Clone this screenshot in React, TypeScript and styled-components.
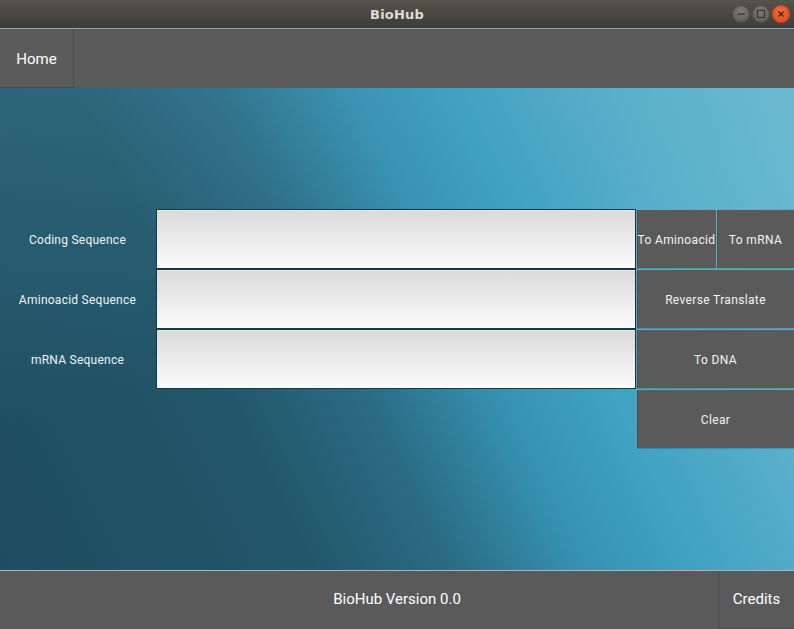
import React from "react";
import styled, { createGlobalStyle } from "styled-components";

const Global = createGlobalStyle`
  html, body { margin: 0; padding: 0; background: #3c3b37; }
  * { box-sizing: border-box; }
`;

const Window = styled.div`
  width: 794px;
  height: 629px;
  display: flex;
  flex-direction: column;
  overflow: hidden;
  font-family: Roboto, "Liberation Sans", sans-serif;
`;

const TitleBar = styled.div`
  height: 29px;
  flex: none;
  position: relative;
  display: flex;
  align-items: center;
  justify-content: center;
  background: linear-gradient(#56534c, #3e3c38);
  border-bottom: 1px solid #8fa4ad;
`;

const Title = styled.span`
  font-family: "DejaVu Sans", sans-serif;
  font-weight: bold;
  font-size: 13px;
  color: #dfdbd2;
  letter-spacing: 0.2px;
`;

const Controls = styled.div`
  position: absolute;
  right: 4px;
  top: 5px;
  display: flex;
  gap: 2px;
`;

const Dot = styled.div<{ $close?: boolean }>`
  width: 18px;
  height: 18px;
  border-radius: 50%;
  display: flex;
  align-items: center;
  justify-content: center;
  background: ${(p) =>
    p.$close
      ? "radial-gradient(circle at 50% 35%, #f26a3c, #d9461a)"
      : "radial-gradient(circle at 50% 35%, #7c7a74, #5a5853)"};
  box-shadow: inset 0 0 0 1px ${(p) => (p.$close ? "#b8421c" : "#4a4843")};
`;

const Header = styled.div`
  height: 59px;
  flex: none;
  display: flex;
  background: #5a5a5a;
`;

const HomeButton = styled.div`
  width: 74px;
  display: flex;
  align-items: center;
  justify-content: center;
  padding-top: 1px;
  color: #ffffff;
  font-size: 15px;
  background: #5b5b5b;
  border-right: 1px solid #4b4b4b;
  border-bottom: 1px solid #4a4a4a;
`;

const Main = styled.div`
  flex: 1;
  background:
    linear-gradient(160deg, rgba(90, 160, 185, 0.22) 0%, rgba(90, 160, 185, 0) 45%),
    linear-gradient(
      64deg,
      #1e4d5f 0%,
      #22566a 30%,
      #2a6c84 44%,
      #3792b2 57%,
      #40a1c1 67%,
      #5ab1cb 83%,
      #6cbad1 100%
    );
  padding-top: 121px;
`;

const Form = styled.div`
  display: grid;
  grid-template-columns: 155px 480px 157px;
  grid-template-rows: 60px 60px 60px 60px;
  column-gap: 1px;
`;

const Label = styled.div<{ $row: number }>`
  grid-column: 1;
  grid-row: ${(p) => p.$row};
  display: flex;
  align-items: center;
  justify-content: center;
  padding-top: 2px;
  color: #eef2f4;
  font-size: 12px;
  letter-spacing: 0.25px;
`;

const Field = styled.div<{ $row: number }>`
  grid-column: 2;
  grid-row: ${(p) => p.$row};
  border: 1px solid #173845;
  background: linear-gradient(#dadada, #f6f6f6 85%, #fbfbfb);
  box-shadow: inset 0 1px 0 #e8e8e8;
`;

const ButtonCell = styled.div<{ $row: number }>`
  grid-column: 3;
  grid-row: ${(p) => p.$row};
  display: flex;
  gap: 1px;
  padding-bottom: 1px;
`;

const Btn = styled.div<{ $w?: number }>`
  flex: ${(p) => (p.$w ? `0 0 ${p.$w}px` : "1")};
  display: flex;
  align-items: center;
  justify-content: center;
  padding-top: 2px;
  background: #5a5a5a;
  color: #f2f2f2;
  font-size: 12px;
  letter-spacing: 0.35px;
  white-space: nowrap;
  border-top: 1px solid #78a3b3;
  box-shadow: inset 1px 0 0 #505050, 0 1px 0 rgba(0,0,0,0.15);
`;

const Footer = styled.div`
  height: 59px;
  flex: none;
  display: grid;
  grid-template-columns: 76px 1fr 76px;
  background: #5a5a5a;
  border-top: 1px solid #a9b4b8;
`;

const FooterText = styled.div`
  grid-column: 2;
  display: flex;
  align-items: center;
  justify-content: center;
  padding-bottom: 2px;
  color: #ffffff;
  font-size: 15px;
`;

const Credits = styled.div`
  grid-column: 3;
  display: flex;
  align-items: center;
  justify-content: center;
  padding-bottom: 2px;
  color: #ffffff;
  font-size: 15px;
  border-left: 1px solid #4d4d4d;
  border-bottom: 1px solid #4a4a4a;
`;

export default function App() {
  return (
    <Window>
      <Global />
      <TitleBar>
        <Title>BioHub</Title>
        <Controls>
          <Dot>
            <svg width="10" height="10" viewBox="0 0 10 10">
              <line x1="1.5" y1="5" x2="8.5" y2="5" stroke="#3a3935" strokeWidth="1.4" />
            </svg>
          </Dot>
          <Dot>
            <svg width="10" height="10" viewBox="0 0 10 10">
              <rect x="1.5" y="1.5" width="7" height="7" fill="none" stroke="#3a3935" strokeWidth="1.3" />
            </svg>
          </Dot>
          <Dot $close>
            <svg width="10" height="10" viewBox="0 0 10 10">
              <path d="M2.5 2.5 L7.5 7.5 M7.5 2.5 L2.5 7.5" stroke="#3a2a22" strokeWidth="1.4" />
            </svg>
          </Dot>
        </Controls>
      </TitleBar>
      <Header>
        <HomeButton>Home</HomeButton>
      </Header>
      <Main>
        <Form>
          <Label $row={1}>Coding Sequence</Label>
          <Field $row={1} />
          <ButtonCell $row={1}>
            <Btn $w={79}>To Aminoacid</Btn>
            <Btn>To mRNA</Btn>
          </ButtonCell>
          <Label $row={2}>Aminoacid Sequence</Label>
          <Field $row={2} />
          <ButtonCell $row={2}>
            <Btn>Reverse Translate</Btn>
          </ButtonCell>
          <Label $row={3}>mRNA Sequence</Label>
          <Field $row={3} />
          <ButtonCell $row={3}>
            <Btn>To DNA</Btn>
          </ButtonCell>
          <ButtonCell $row={4}>
            <Btn>Clear</Btn>
          </ButtonCell>
        </Form>
      </Main>
      <Footer>
        <FooterText>BioHub Version 0.0</FooterText>
        <Credits>Credits</Credits>
      </Footer>
    </Window>
  );
}
